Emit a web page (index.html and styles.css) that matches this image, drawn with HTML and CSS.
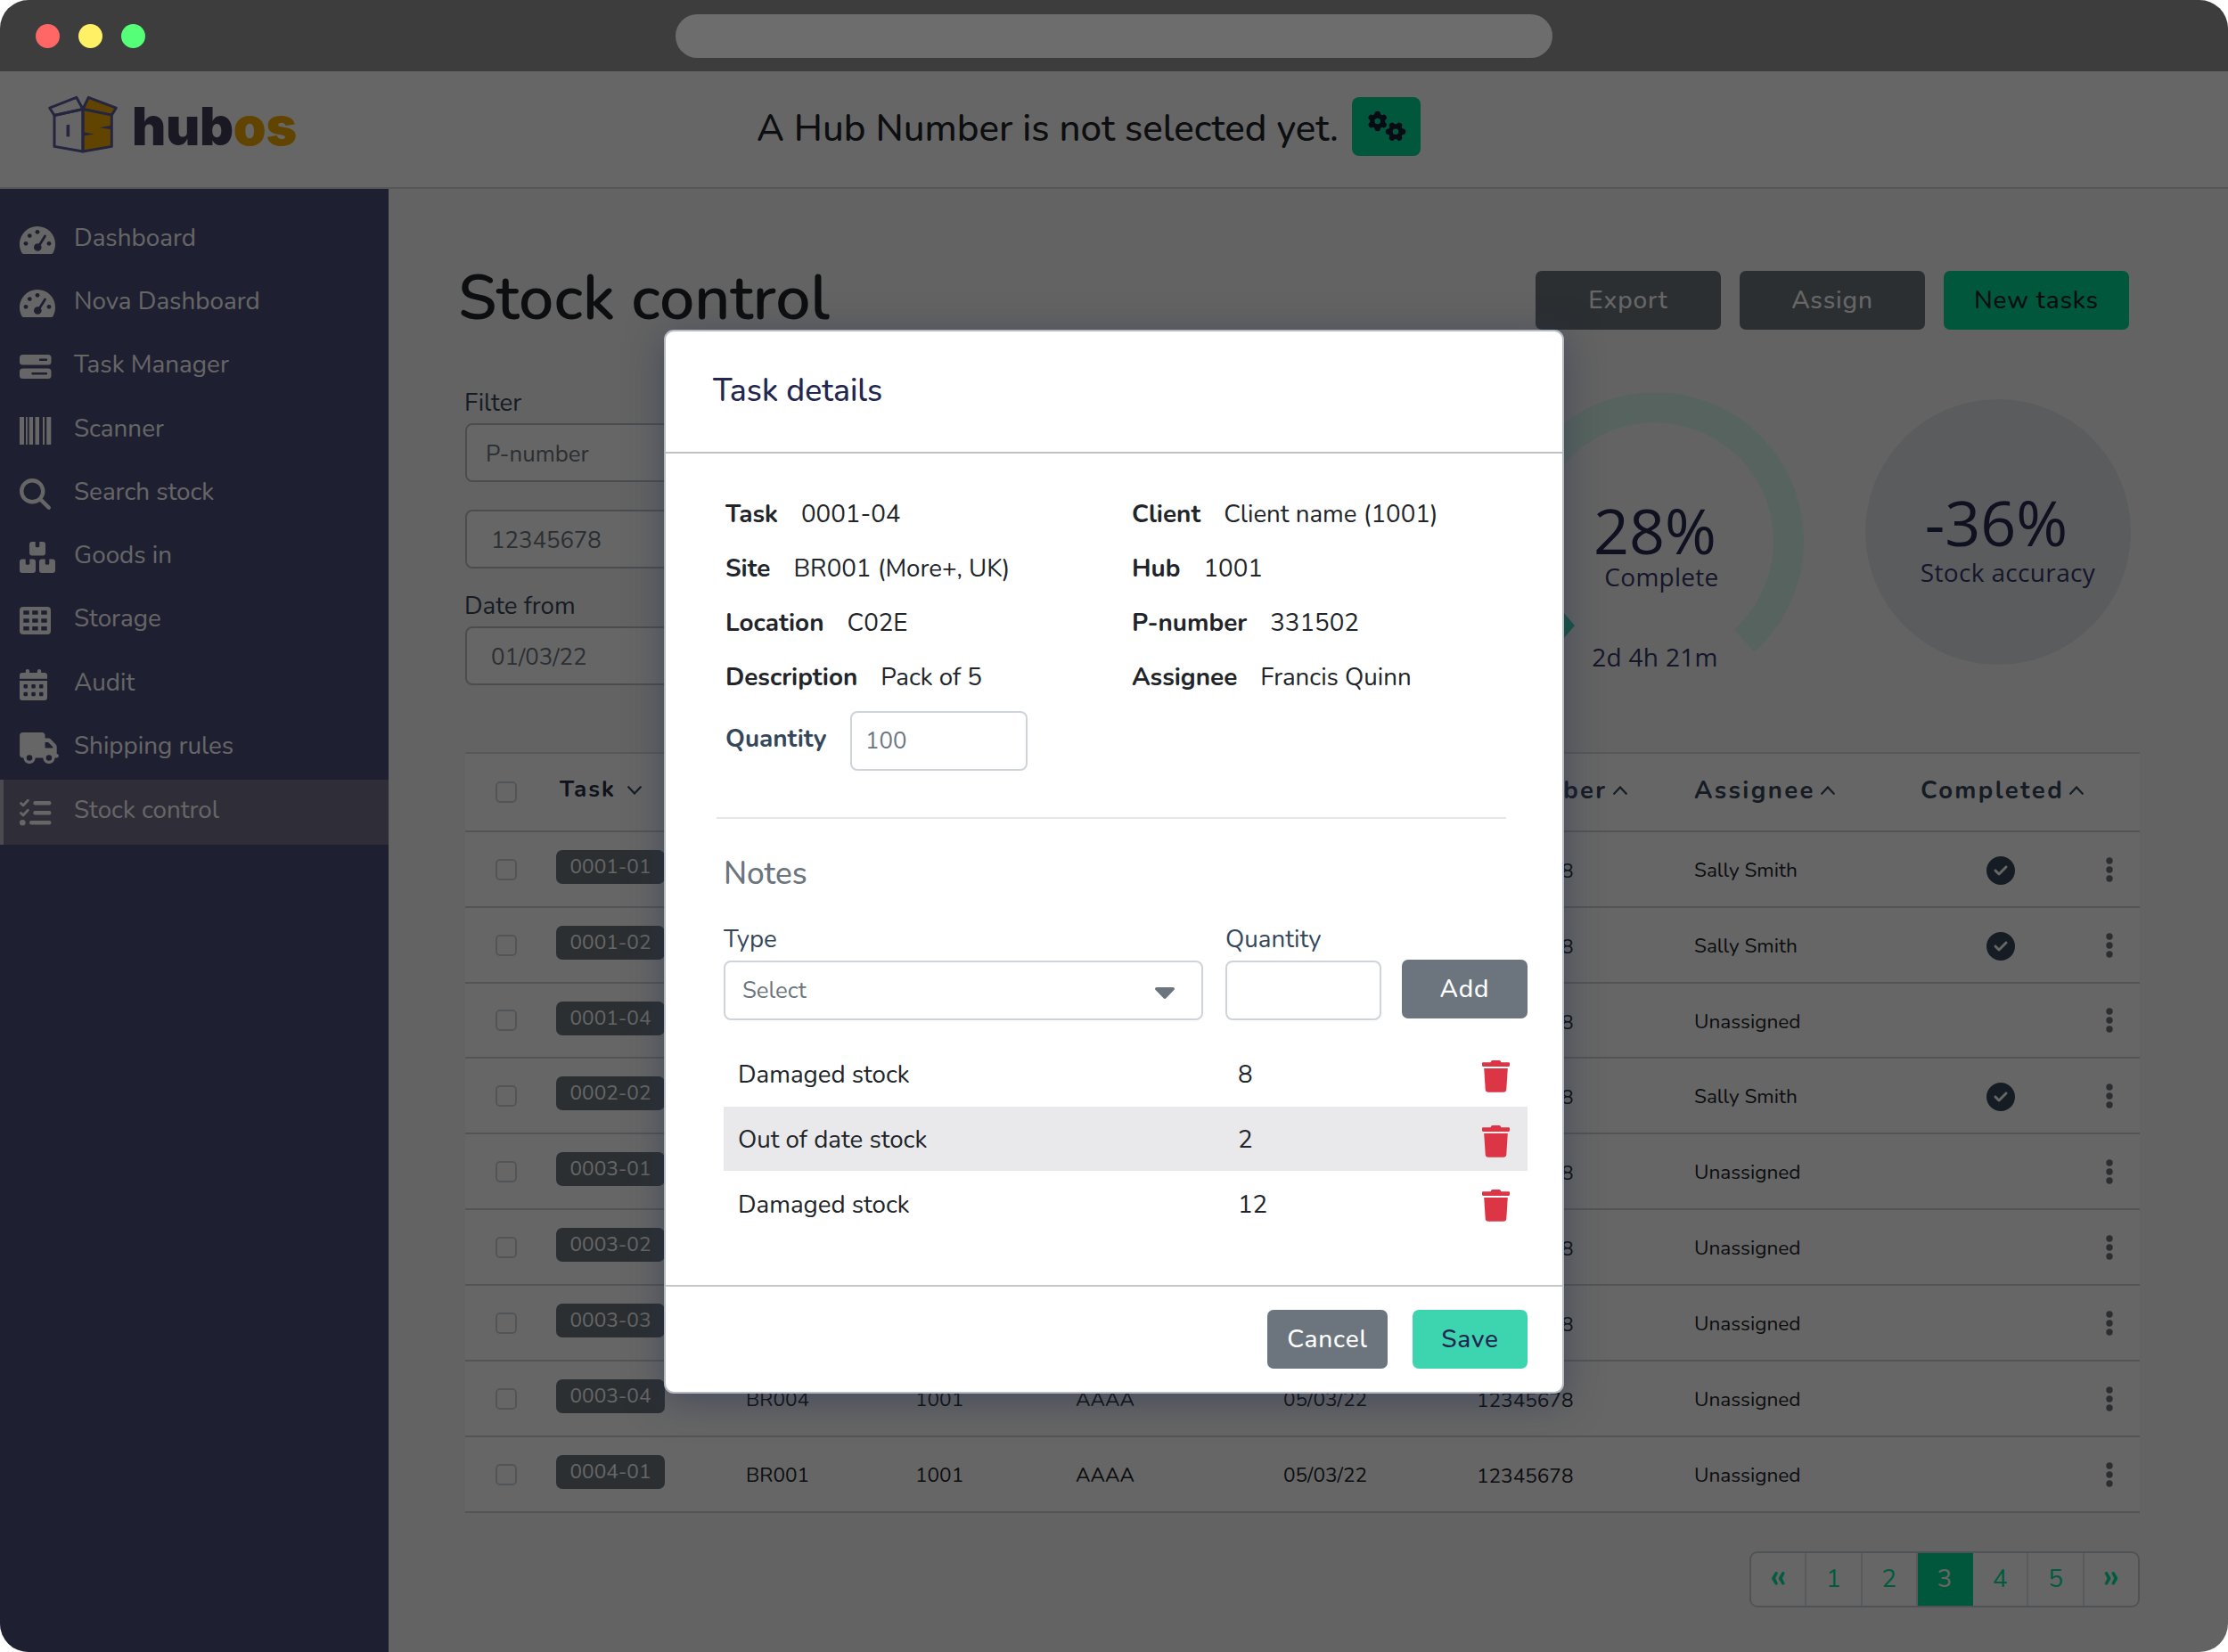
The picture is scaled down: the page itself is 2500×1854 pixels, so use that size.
FILE: index.html
```html
<!DOCTYPE html>
<html lang="en">
<head>
    <meta charset="UTF-8">
    <meta name="viewport" content="width=device-width, initial-scale=1.0">
    <title>Stock control - hubos</title>
    <link rel="stylesheet" href="styles.css">
</head>
<body>
    <!-- Icon sprite -->
    <svg class="sprite">
        <symbol id="i-gauge" viewBox="0 0 40 31">
            <path fill-rule="evenodd" d="M20 0a20 20 0 0 1 20 20c0 3.500-.8 6.500-2.300 9.400-.6 1-1.500 1.600-2.700 1.600H5c-1.200 0-2.100-.6-2.700-1.600A20 20 0 0 1 20 0z"/>
            <g fill="#4b4e7a"><circle cx="20" cy="6.300" r="2.400"/><circle cx="11.300" cy="10.600" r="2.400"/><circle cx="7" cy="19.300" r="2.400"/><circle cx="33" cy="19.300" r="2.400"/><circle cx="20.300" cy="23.500" r="4.300"/></g>
            <path d="M28.500 11 21 23" stroke="#4b4e7a" stroke-width="2.800" stroke-linecap="round"/>
        </symbol>
        <symbol id="i-server" viewBox="0 0 36 27">
            <rect width="35.500" height="11.500" rx="3.500"/><rect y="15.500" width="35.500" height="11.500" rx="3.500"/>
            <path d="M23 5.700h7M14.500 21.300H30" stroke="#4b4e7a" stroke-width="2.400" stroke-linecap="round"/>
        </symbol>
        <symbol id="i-barcode" viewBox="0 0 36 31">
            <path d="M0 0h5v31H0zM7 0h1.800v31H7zM10.700 0H15v31h-4.300zM17.500 0H22v31h-4.500zM26 0h2v31h-2zM30.300 0h5v31h-5z"/>
        </symbol>
        <symbol id="i-search" viewBox="0 0 512 512">
            <path d="M416 208c0 45.900-14.900 88.300-40 122.700L502.600 457.400c12.500 12.500 12.500 32.800 0 45.300s-32.800 12.500-45.300 0L330.700 376c-34.400 25.200-76.800 40-122.700 40C93.100 416 0 322.900 0 208S93.100 0 208 0S416 93.100 416 208zM208 352a144 144 0 1 0 0-288 144 144 0 1 0 0 288z"/>
        </symbol>
        <symbol id="i-boxes" viewBox="0 0 40 36">
            <path id="box" d="M14 0h3.700v5c0 1 1 1.300 2.300 1.300S22.300 6 22.300 5V0H26a3 3 0 0 1 3 3v9.500a3 3 0 0 1-3 3H14a3 3 0 0 1-3-3V3a3 3 0 0 1 3-3z"/>
            <use href="#box" x="-11" y="19.500"/><use href="#box" x="11" y="19.500"/>
        </symbol>
        <symbol id="i-grid" viewBox="0 0 35 31">
            <rect width="35" height="31" rx="4"/>
            <path fill="#4b4e7a" d="M4.300 4.300h6.400v4.500H4.300zM14.200 4.300h6.400v4.500h-6.400zM24.300 4.300h6.400v4.500h-6.400zM4.300 13.200h6.400v4.500H4.300zM14.200 13.200h6.400v4.500h-6.400zM24.300 13.200h6.400v4.500h-6.400zM4.300 22h6.400v4.500H4.300zM14.200 22h6.400v4.500h-6.400zM24.300 22h6.400v4.500h-6.400z"/>
        </symbol>
        <symbol id="i-calendar" viewBox="0 0 31 35">
            <path d="M3 4h3.700V2.200a2.200 2.200 0 0 1 4.400 0V4h8.700V2.200a2.200 2.200 0 0 1 4.400 0V4H28a3 3 0 0 1 3 3v3.700H0V7a3 3 0 0 1 3-3zM0 13h31v19a3 3 0 0 1-3 3H3a3 3 0 0 1-3-3z"/>
            <g fill="#4b4e7a"><rect x="4.500" y="17" width="4.500" height="4.500" rx="1"/><rect x="13.300" y="17" width="4.500" height="4.500" rx="1"/><rect x="22" y="17" width="4.500" height="4.500" rx="1"/><rect x="4.500" y="25.700" width="4.500" height="4.500" rx="1"/><rect x="13.300" y="25.700" width="4.500" height="4.500" rx="1"/><rect x="22" y="25.700" width="4.500" height="4.500" rx="1"/></g>
        </symbol>
        <symbol id="i-truck" viewBox="0 0 640 512">
            <path d="M48 0C21.500 0 0 21.500 0 48V368c0 26.500 21.500 48 48 48H64c0 53 43 96 96 96s96-43 96-96H384c0 53 43 96 96 96s96-43 96-96h32c17.700 0 32-14.300 32-32s-14.300-32-32-32V237.300c0-17-6.700-33.300-18.700-45.300L512 114.700c-12-12-28.300-18.700-45.300-18.700H416V48c0-26.500-21.500-48-48-48H48zM416 160h50.700L544 237.300V256H416V160zM112 416a48 48 0 1 1 96 0 48 48 0 1 1 -96 0zm368-48a48 48 0 1 1 0 96 48 48 0 1 1 0-96z"/>
        </symbol>
        <symbol id="i-list" viewBox="0 0 36 30">
            <g fill="none" stroke="#fff" stroke-linecap="round" stroke-linejoin="round"><path stroke-width="2.800" d="M1.500 4.500 4 7l5.300-5.700M1.500 15.500 4 18l5.300-5.700"/><path stroke-width="4.400" d="M17.500 4.200h15.800M17.500 15.200h15.800M13.200 26.200h20.100"/></g>
            <circle cx="3.300" cy="26.200" r="3.300"/>
        </symbol>
        <symbol id="i-check" viewBox="0 0 512 512">
            <path d="M256 512A256 256 0 1 0 256 0a256 256 0 1 0 0 512zM369 209L241 337c-9.400 9.400-24.600 9.400-33.900 0l-64-64c-9.400-9.400-9.400-24.600 0-33.900s24.600-9.400 33.900 0l47 47L335 175c9.400-9.400 24.600-9.400 33.900 0s9.400 24.600 0 33.900z"/>
        </symbol>
        <symbol id="i-dots" viewBox="0 0 8 28">
            <circle cx="4" cy="4" r="3.700"/><circle cx="4" cy="14" r="3.700"/><circle cx="4" cy="24" r="3.700"/>
        </symbol>
        <symbol id="i-up" viewBox="0 0 16 10"><path d="M1.200 8.800 8 1.500l6.800 7.300" fill="none" stroke="#37475a" stroke-width="2.200" stroke-linecap="round"/></symbol>
        <symbol id="i-down" viewBox="0 0 16 10"><path d="M1.200 1.200 8 8.500l6.800-7.300" fill="none" stroke="#37475a" stroke-width="2.200" stroke-linecap="round"/></symbol>
        <symbol id="i-trash" viewBox="0 0 31 36">
            <path d="M1.200 2.300h8.300L10.200 1c.3-.6.900-1 1.600-1h7.400c.7 0 1.300.4 1.600 1l.7 1.300h8.300c.7 0 1.200.5 1.200 1.200v2.300c0 .7-.5 1.200-1.200 1.200H1.200C.5 7 0 6.500 0 5.800V3.500c0-.7.5-1.200 1.200-1.200zM2.200 9h26.600l-1.500 23.500a3.400 3.400 0 0 1-3.400 3.200H7.100a3.400 3.400 0 0 1-3.400-3.200z"/>
        </symbol>
    </svg>

    <div class="window">
        <div class="titlebar">
            <span class="light red"></span>
            <span class="light yellow"></span>
            <span class="light green"></span>
            <div class="address"></div>
        </div>

        <div class="app">
            <header class="header">
                <div class="logo">
                    <svg class="logo-box" viewBox="71 50 236 197">
                        <g stroke="#5c5ea0" stroke-width="9" stroke-linejoin="round" fill="none">
                            <path d="M76 93 167 57l22 40-97 21z"/>
                            <path d="M208 57l94 36-15 24-98-20z" fill="#f2aa00"/>
                            <path d="M189 97l98 20v107l-98 17z" fill="#f2aa00"/>
                            <path d="M92 118l97-21v144l-97-17z"/>
                        </g>
                        <path d="M133 151l11-2v42l-11-1zM246 160l40-8v14zM192 175l35 7-35 6z" fill="#5c5ea0"/>
                    </svg>
                    <div class="logo-text">hub<span>os</span></div>
                </div>
                <div class="hub-status">A Hub Number is not selected yet.</div>
                <button class="btn-gears">
                    <svg viewBox="0 0 77 66">
                        <g stroke="#171c33" stroke-width="6.500" stroke-linecap="round">
                            <path d="M28.700 19v16M21.800 23l13.800 8M35.600 23l-13.800 8"/>
                            <path d="M41 38.700h16M45 31.800l8 13.800M53 31.800l-8 13.800"/>
                        </g>
                        <g fill="#171c33"><circle cx="28.700" cy="27" r="8.500"/><circle cx="49" cy="38.700" r="8.500"/></g>
                        <g fill="#00d994"><circle cx="28.700" cy="27" r="3.300"/><circle cx="49" cy="38.700" r="3.300"/></g>
                    </svg>
                </button>
            </header>

            <div class="body">
                <nav class="sidebar">
                    <a class="nav-item"><span class="nav-icon"><svg width="40" height="31"><use href="#i-gauge"/></svg></span><span class="nav-label">Dashboard</span></a>
                    <a class="nav-item"><span class="nav-icon"><svg width="40" height="31"><use href="#i-gauge"/></svg></span><span class="nav-label">Nova Dashboard</span></a>
                    <a class="nav-item"><span class="nav-icon"><svg width="36" height="27"><use href="#i-server"/></svg></span><span class="nav-label">Task Manager</span></a>
                    <a class="nav-item"><span class="nav-icon"><svg width="36" height="31"><use href="#i-barcode"/></svg></span><span class="nav-label">Scanner</span></a>
                    <a class="nav-item"><span class="nav-icon"><svg width="35" height="35"><use href="#i-search"/></svg></span><span class="nav-label">Search stock</span></a>
                    <a class="nav-item"><span class="nav-icon"><svg width="40" height="36"><use href="#i-boxes"/></svg></span><span class="nav-label">Goods in</span></a>
                    <a class="nav-item"><span class="nav-icon"><svg width="35" height="31"><use href="#i-grid"/></svg></span><span class="nav-label">Storage</span></a>
                    <a class="nav-item"><span class="nav-icon"><svg width="31" height="35"><use href="#i-calendar"/></svg></span><span class="nav-label">Audit</span></a>
                    <a class="nav-item"><span class="nav-icon"><svg width="44" height="35"><use href="#i-truck"/></svg></span><span class="nav-label">Shipping rules</span></a>
                    <a class="nav-item active"><span class="nav-icon"><svg width="36" height="30"><use href="#i-list"/></svg></span><span class="nav-label">Stock control</span></a>
                </nav>

                <main class="main">
                    <div class="page-head">
                        <h1>Stock control</h1>
                        <div class="page-actions">
                            <button class="btn btn-secondary">Export</button>
                            <button class="btn btn-secondary">Assign</button>
                            <button class="btn btn-success">New tasks</button>
                        </div>
                    </div>

                    <div class="overview">
                        <div class="filters">
                            <label>Filter</label>
                            <div class="field field-first">P-number</div>
                            <div class="field field-second">12345678</div>
                            <label>Date from</label>
                            <div class="field">01/03/22</div>
                        </div>

                        <div class="gauge">
                            <svg class="gauge-ring" viewBox="0 0 334 334">
                                <path d="M17 167A150 150 0 1 1 267 278" fill="none" stroke="#d9f7ec" stroke-width="34"/>
                                <path d="M40 247h25l12 14-12 14H40z" fill="#3dd5af"/>
                            </svg>
                            <div class="gauge-value">28%</div>
                            <div class="gauge-label">Complete</div>
                            <div class="gauge-time">2d 4h 21m</div>
                        </div>

                        <div class="accuracy">
                            <div class="accuracy-value">-36%</div>
                            <div class="accuracy-label">Stock accuracy</div>
                        </div>
                    </div>

                    <table class="tasks">
                        <colgroup>
                            <col class="c-check"><col class="c-task"><col class="c-site"><col class="c-hub"><col class="c-client">
                            <col class="c-date"><col class="c-pnum"><col class="c-assignee"><col class="c-done"><col class="c-menu">
                        </colgroup>
                        <thead>
                            <tr>
                                <th><span class="checkbox"></span></th>
                                <th class="th-task">Task<svg class="sort"><use href="#i-down"/></svg></th>
                                <th></th>
                                <th></th>
                                <th></th>
                                <th></th>
                                <th>P-number<svg class="sort"><use href="#i-up"/></svg></th>
                                <th>Assignee<svg class="sort"><use href="#i-up"/></svg></th>
                                <th>Completed<svg class="sort"><use href="#i-up"/></svg></th>
                                <th></th>
                            </tr>
                        </thead>
                        <tbody id="taskTableBody">
                            <!-- Task rows will be populated here -->
                        </tbody>
                    </table>

                    <div class="pagination">
                        <a class="page arrow">«</a>
                        <a class="page">1</a>
                        <a class="page">2</a>
                        <a class="page current">3</a>
                        <a class="page">4</a>
                        <a class="page">5</a>
                        <a class="page arrow">»</a>
                    </div>
                </main>
            </div>

            <!-- Task details modal -->
            <div class="overlay">
                <div class="modal">
                    <div class="modal-header">Task details</div>

                    <div class="modal-body">
                        <div class="details">
                            <div class="detail"><b>Task</b>0001-04</div>
                            <div class="detail"><b>Client</b>Client name (1001)</div>
                            <div class="detail"><b>Site</b>BR001 (More+, UK)</div>
                            <div class="detail"><b>Hub</b>1001</div>
                            <div class="detail"><b>Location</b>C02E</div>
                            <div class="detail"><b>P-number</b>331502</div>
                            <div class="detail"><b>Description</b>Pack of 5</div>
                            <div class="detail"><b>Assignee</b>Francis Quinn</div>
                        </div>
                        <div class="quantity">
                            <b>Quantity</b>
                            <div class="input">100</div>
                        </div>
                        <div class="divider"></div>

                        <h2>Notes</h2>
                        <div class="note-form">
                            <div class="type-group">
                                <label>Type</label>
                                <div class="input select">Select
                                    <svg class="caret" viewBox="0 0 22 13"><path d="M2 0h18c1.800 0 2.600 1.700 1.400 3l-9 9.300c-.8.900-2 .9-2.800 0l-9-9.300C-.6 1.700.2 0 2 0z"/></svg>
                                </div>
                            </div>
                            <div class="qty-group">
                                <label>Quantity</label>
                                <div class="input"></div>
                            </div>
                            <button class="btn btn-secondary btn-add">Add</button>
                        </div>

                        <div class="notes">
                            <div class="note"><span class="note-type">Damaged stock</span><span class="note-qty">8</span><svg class="trash"><use href="#i-trash"/></svg></div>
                            <div class="note striped"><span class="note-type">Out of date stock</span><span class="note-qty">2</span><svg class="trash"><use href="#i-trash"/></svg></div>
                            <div class="note"><span class="note-type">Damaged stock</span><span class="note-qty">12</span><svg class="trash"><use href="#i-trash"/></svg></div>
                        </div>
                    </div>

                    <div class="modal-footer">
                        <button class="btn btn-secondary btn-cancel">Cancel</button>
                        <button class="btn btn-save">Save</button>
                    </div>
                </div>
            </div>
        </div>
    </div>

    <script>
        const tasks = [
            { id: '0001-01', assignee: 'Sally Smith', done: true },
            { id: '0001-02', assignee: 'Sally Smith', done: true },
            { id: '0001-04', assignee: 'Unassigned' },
            { id: '0002-02', assignee: 'Sally Smith', done: true },
            { id: '0003-01', assignee: 'Unassigned' },
            { id: '0003-02', assignee: 'Unassigned' },
            { id: '0003-03', assignee: 'Unassigned' },
            { id: '0003-04', site: 'BR004', hub: '1001', client: 'AAAA', date: '05/03/22', assignee: 'Unassigned' },
            { id: '0004-01', site: 'BR001', hub: '1001', client: 'AAAA', date: '05/03/22', assignee: 'Unassigned' }
        ];

        // Fill the task table
        const tableBody = document.getElementById('taskTableBody');
        tasks.forEach(task => {
            const row = document.createElement('tr');
            row.innerHTML = `
                <td><span class="checkbox"></span></td>
                <td class="td-task"><span class="badge">${task.id}</span></td>
                <td>${task.site || ''}</td>
                <td>${task.hub || ''}</td>
                <td>${task.client || ''}</td>
                <td>${task.date || ''}</td>
                <td class="td-pnum">12345678</td>
                <td>${task.assignee}</td>
                <td>${task.done ? '<svg class="done"><use href="#i-check"/></svg>' : ''}</td>
                <td><svg class="menu"><use href="#i-dots"/></svg></td>
            `;
            tableBody.appendChild(row);
        });
    </script>
</body>
</html>
```
FILE: styles.css
```css
* {
    margin: 0;
    padding: 0;
    box-sizing: border-box;
}

body {
    font-family: Nunito, Lato, sans-serif;
    font-size: 27.7px;
    background: #fff;
    color: #212529;
}

svg {
    display: block;
}

.sprite {
    display: none;
}

.window {
    width: 2500px;
    height: 1854px;
    border-radius: 32px;
    overflow: hidden;
    display: flex;
    flex-direction: column;
}

/* Browser bar */
.titlebar {
    height: 80px;
    background: #3d3d3d;
    display: flex;
    align-items: center;
    padding-left: 40px;
    gap: 21px;
}

.light {
    width: 27px;
    height: 27px;
    border-radius: 50%;
}

.red {
    background: #ff6666;
}

.yellow {
    background: #fff066;
}

.green {
    background: #55ff77;
}

.address {
    width: 984px;
    height: 49px;
    margin-left: 574px;
    border-radius: 25px;
    background: #6d6d6d;
}

.app {
    flex: 1;
    position: relative;
    display: flex;
    flex-direction: column;
}

/* Header */
.header {
    height: 132px;
    background: #fff;
    border-bottom: 2px solid #d5d8de;
    display: flex;
    align-items: center;
    padding: 0 0 6px 54px;
}

.logo {
    width: 795px;
    display: flex;
    align-items: center;
    gap: 16px;
}

.logo-box {
    width: 78px;
    height: 65px;
    margin-bottom: 5px;
}

.logo-text {
    font-family: Inter, sans-serif;
    font-size: 59px;
    font-weight: 900;
    line-height: 60px;
    letter-spacing: -0.005em;
    color: #413c58;
}

.logo-text span {
    color: #f2aa00;
}

.hub-status {
    width: 668px;
    padding-top: 3px;
    font-size: 42.1px;
    font-weight: 500;
    color: #212529;
    white-space: nowrap;
}

.btn-gears {
    width: 77px;
    height: 66px;
    border: none;
    border-radius: 8px;
    background: #00d994;
}

.body {
    flex: 1;
    display: flex;
}

/* Sidebar */
.sidebar {
    width: 436px;
    background: #4b4e7a;
    padding-top: 21px;
    color: #fff;
}

.nav-item {
    height: 71.3px;
    display: flex;
    align-items: center;
    padding-left: 22px;
    padding-top: 1px;
    font-size: 27.8px;
}

.nav-icon {
    width: 61px;
    fill: #fff;
}

.nav-label {
    padding-bottom: 5px;
}

.nav-item.active {
    height: 73px;
    padding-left: 18px;
    border-left: 4px solid #b9b9c8;
    background: #75708d;
}

/* Main content */
.main {
    flex: 1;
    background: #f8f8f8;
    padding: 92px 99px 0 86px;
}

.page-head {
    height: 66px;
    display: flex;
    justify-content: space-between;
    align-items: center;
    padding-right: 12px;
    margin-left: -8px;
}

h1 {
    font-size: 69.6px;
    font-weight: 600;
    line-height: 66px;
    padding-bottom: 2px;
}

.page-actions {
    display: flex;
    gap: 21px;
}

.btn {
    width: 208px;
    height: 66px;
    border: none;
    border-radius: 7px;
    font-family: inherit;
    font-size: 28px;
    font-weight: 500;
    letter-spacing: 0.03em;
    padding-bottom: 1px;
}

.btn-secondary {
    background: #6c757d;
    color: #fff;
}

.btn-success {
    background: #00d994;
    color: #212529;
}

.overview {
    height: 474px;
    display: flex;
}

.filters {
    width: 1168px;
    padding-top: 66px;
}

.filters label {
    display: block;
    height: 39px;
    line-height: 33px;
    margin-left: -1px;
    color: #37475a;
}

.field {
    width: 420px;
    height: 66px;
    line-height: 65px;
    border: 2px solid #b9c1c7;
    border-radius: 8px;
    background: #fff;
    color: #6c757d;
    font-size: 25.8px;
    padding-left: 27px;
}

.field-first {
    padding-left: 21px;
    margin-bottom: 31px;
}

.field-second {
    margin-bottom: 26px;
}

/* Stats */
.gauge,
.accuracy {
    font-family: "Open Sans", sans-serif;
    font-size: 28px;
    line-height: 36px;
    letter-spacing: 0.01em;
    color: #37396a;
}

.gauge {
    position: relative;
    width: 334px;
    height: 334px;
    margin: 71px 69px 0 0;
    text-align: center;
}

.gauge-ring {
    position: absolute;
    width: 334px;
    height: 334px;
}

.gauge-value,
.accuracy-value {
    font-size: 70px;
    font-weight: 500;
    line-height: 68px;
    color: #272a52;
}

.gauge-value {
    padding-top: 120px;
    letter-spacing: 0;
}

.gauge-label {
    padding-left: 15px;
}

.gauge-time {
    margin-top: 54px;
}

.accuracy {
    width: 298px;
    height: 298px;
    margin-top: 78px;
    border-radius: 50%;
    background: #e4e7ec;
    text-align: center;
    padding-top: 104px;
}

.accuracy-value {
    padding-right: 4px;
    letter-spacing: 0;
}

.accuracy-label {
    padding-left: 22px;
    margin-top: 4px;
    letter-spacing: 0.012em;
    white-space: nowrap;
}

/* Tasks table */
.tasks {
    width: 1879px;
    table-layout: fixed;
    border-collapse: separate;
    border-spacing: 0;
    background: #fff;
    font-size: 22.6px;
}

.c-check { width: 102px; }
.c-task { width: 213px; }
.c-site { width: 190px; }
.c-hub { width: 180px; }
.c-client { width: 233px; }
.c-date { width: 217px; }
.c-pnum { width: 244px; }
.c-assignee { width: 254px; }
.c-done { width: 200px; }
.c-menu { width: 46px; }

.tasks th {
    height: 90px;
    text-align: left;
    font-size: 27.5px;
    font-weight: 700;
    letter-spacing: 0.087em;
    color: #37475a;
    border-top: 2px solid #d8dbde;
    border-bottom: 2px solid #cfd3d7;
    padding-bottom: 4px;
    white-space: nowrap;
}

.tasks th:first-child {
    padding-bottom: 0;
}

.tasks .th-task {
    padding-left: 4px;
    padding-bottom: 7px;
    font-size: 26px;
    letter-spacing: 0.075em;
    color: #272b45;
}

.tasks td {
    height: 85px;
    border-bottom: 2px solid #cfd3d7;
    padding-top: 2px;
}

.tasks tr:nth-child(3) td {
    height: 84px;
}

.tasks td:first-child {
    padding-top: 0;
}

.tasks .td-pnum {
    padding-top: 4px;
}

.checkbox {
    display: block;
    width: 24px;
    height: 24px;
    margin-left: 34px;
    border: 2px solid #ced4da;
    border-radius: 5px;
}

.sort {
    display: inline-block;
    width: 16px;
    height: 10px;
    margin-left: 6px;
    vertical-align: 4px;
}

.th-task .sort {
    margin-left: 13px;
    vertical-align: 2px;
}

.badge {
    display: block;
    width: 122px;
    height: 38px;
    line-height: 37px;
    margin-bottom: 7px;
    border-radius: 7px;
    background: #6c757d;
    color: #fff;
    font-size: 22.6px;
    text-align: center;
}

.done {
    width: 32px;
    height: 32px;
    margin-left: 74px;
    margin-top: 1px;
    fill: #37475a;
}

.menu {
    width: 8px;
    height: 28px;
    margin: 0 0 2px 8px;
    fill: #6c757d;
}

.pagination {
    display: flex;
    width: 438px;
    height: 63px;
    margin: 43px 0 0 auto;
    border: 2px solid #c9d0d5;
    border-radius: 9px;
    background: #fff;
}

.page {
    flex: 1;
    border-right: 2px solid #dee2e6;
    text-align: center;
    line-height: 59px;
    font-size: 28px;
    color: #00e69d;
}

.page:last-child {
    border-right: none;
}

.page.current {
    background: #00d994;
    border-color: #00d994;
    color: #fff;
}

.page.arrow {
    font-weight: 600;
    font-size: 40px;
    line-height: 53px;
}

/* Modal */
.overlay {
    position: absolute;
    top: 0;
    left: 0;
    width: 100%;
    height: 100%;
    background: rgba(0, 0, 0, 0.6);
    display: flex;
    justify-content: center;
    align-items: flex-start;
    padding-top: 290px;
}

.modal {
    width: 1010px;
    height: 1194px;
    display: flex;
    flex-direction: column;
    background: #fff;
    border: 2px solid #b6bac4;
    border-radius: 11px;
    box-shadow: 0 8px 40px rgba(40, 50, 80, 0.5);
}

.modal-header {
    height: 137px;
    border-bottom: 2px solid #bfc2c5;
    padding-left: 53px;
    line-height: 133px;
    font-size: 35.6px;
    font-weight: 500;
    color: #23264f;
}

.modal-body {
    flex: 1;
    padding: 38px 39px 0 65px;
}

.details {
    display: grid;
    grid-template-columns: 456px 1fr;
    padding-left: 2px;
}

.detail {
    height: 61px;
    line-height: 61px;
}

.details b {
    margin-right: 26px;
    font-size: 27.9px;
}

.quantity {
    display: flex;
    padding-left: 2px;
    margin-top: 7px;
}

.quantity b {
    width: 140px;
    font-size: 27.9px;
    line-height: 63px;
    color: #34475a;
}

.input {
    height: 67px;
    line-height: 64px;
    border: 2px solid #ced4da;
    border-radius: 8px;
    color: #6c757d;
    font-size: 25.8px;
    padding-left: 15px;
}

.quantity .input {
    width: 199px;
}

.divider {
    height: 2px;
    margin: 52px 24px 0 -8px;
    background: #e6e7e8;
}

h2 {
    font-size: 35.2px;
    font-weight: 500;
    line-height: 40px;
    margin-top: 41px;
    color: #6c757d;
}

.note-form {
    display: flex;
    align-items: flex-end;
    margin-top: 33px;
}

.note-form label {
    display: block;
    height: 45px;
    line-height: 42px;
    color: #34475a;
}

.type-group {
    width: 538px;
    margin-right: 25px;
}

.qty-group {
    width: 175px;
    margin-right: 23px;
}

.select {
    display: flex;
    justify-content: space-between;
    align-items: center;
    padding: 0 30px 0 19px;
}

.caret {
    width: 22px;
    height: 13px;
    margin-top: 6px;
    fill: #6c757d;
}

.btn-add {
    width: 141px;
    margin-bottom: 2px;
}

.notes {
    margin-top: 24px;
}

.note {
    height: 72.7px;
    display: flex;
    align-items: center;
    padding: 2px 20px 0 16px;
}

.striped {
    background: #e9e9eb;
}

.note-type {
    width: 561px;
}

.note-qty {
    flex: 1;
}

.trash {
    width: 31px;
    height: 36px;
    margin-top: 3px;
    fill: #dc3545;
}

.modal-footer {
    height: 120px;
    border-top: 2px solid #c5c8cb;
    display: flex;
    justify-content: flex-end;
    padding: 26px 39px 0 0;
    gap: 28px;
}

.btn-cancel {
    width: 135px;
}

.btn-save {
    width: 129px;
    background: #3dd5af;
    color: #23264f;
}
```
